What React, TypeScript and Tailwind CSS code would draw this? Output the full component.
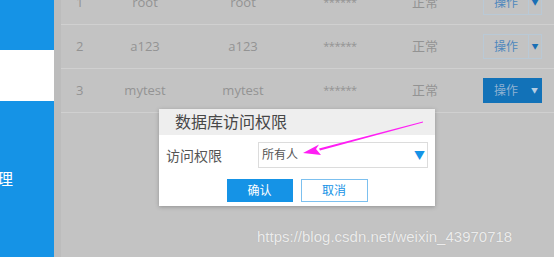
import React from 'react';

const rows = [
    { id: '1', name: 'root', user: 'root', active: false },
    { id: '2', name: 'a123', user: 'a123', active: false },
    { id: '3', name: 'mytest', user: 'mytest', active: true },
];

function OpButton({ active }: { active: boolean }) {
    return (
        <div
            className={
                active
                    ? 'ml-[11px] flex h-[25px] w-[59px] items-center bg-[#1272b8] border border-[#1272b8]'
                    : 'ml-[11px] flex h-[25px] w-[59px] items-center border border-[#b9c9d6]'
            }
        >
            <span className={active ? 'flex-1 text-center text-[12px] text-[#8fb1d2]' : 'flex-1 text-center text-[12px] text-[#4f88bd]'}>
                操作
            </span>
            <span className={active ? 'flex h-full w-[13px] items-center justify-center' : 'flex h-full w-[13px] items-center justify-center border-l border-[#b9c9d6]'}>
                <span className={active ? 'text-[7px] leading-none text-[#b5cde3]' : 'text-[7px] leading-none text-[#1a6fb5]'}>▼</span>
            </span>
        </div>
    );
}

export default function App() {
    return (
        <div
            className="relative flex h-[257px] w-[554px] overflow-hidden bg-[#c3c3c3]"
            style={{ fontFamily: '"Open Sans", "Noto Sans CJK SC", sans-serif' }}
        >
            {/* sidebar */}
            <div className="flex w-[54px] shrink-0 flex-col bg-[#1593e6]">
                <div className="h-[50px]" />
                <div className="h-[51px] bg-white" />
                <div className="mt-[66px] text-[16px] leading-[24px] text-white">
                    <span className="-ml-[3px]">理</span>
                </div>
            </div>
            <div className="w-[7px] shrink-0 bg-[#bcbcbc]" />

            {/* table */}
            <div className="flex-1">
                <div className="-mt-[19px]">
                    {rows.map(r => (
                        <div key={r.id} className="flex h-[44px] items-center border-b border-[#d0d0d0] text-[13px] text-[#939393]">
                            <div className="w-[45px] pl-[15px]">{r.id}</div>
                            <div className="w-[78px] text-center">{r.name}</div>
                            <div className="w-[118px] text-center">{r.user}</div>
                            <div className="w-[76px] text-center text-[11px] tracking-[-0.5px]">******</div>
                            <div className="w-[94px] text-center">正常</div>
                            <OpButton active={r.active} />
                        </div>
                    ))}
                </div>
            </div>

            {/* modal */}
            <div className="absolute left-[159px] top-[109px] w-[276px] bg-white shadow-[0_1px_4px_rgba(0,0,0,0.25)]">
                <div className="flex h-[26px] items-center bg-[#eeeeee] pl-[16px] text-[16px] text-[#474747]">
                    数据库访问权限
                </div>
                <div className="flex items-center pl-[7px] pr-[7px] pt-[7px]">
                    <div className="w-[92px] text-[14px] text-[#555]">访问权限</div>
                    <div className="flex h-[26px] flex-1 items-center justify-between border border-[#dcdcdc] pl-[3px] pr-[2px]">
                        <span className="text-[12px] text-[#555]">所有人</span>
                        <span className="text-[11px] leading-none text-[#1593e6]">▼</span>
                    </div>
                </div>
                <div className="flex justify-center gap-[8px] pb-[4px] pt-[11px]">
                    <button className="h-[23px] w-[66px] bg-[#1593e6] text-[12px] text-white">确认</button>
                    <button className="h-[23px] w-[67px] border border-[#7cc0ef] text-[12px] text-[#1593e6]">取消</button>
                </div>
            </div>

            {/* annotation arrow */}
            <svg className="absolute left-0 top-0" width="554" height="257" viewBox="0 0 554 257">
                <polygon points="423,121.5 319,148.5 320,150.5 423,122.5" fill="#ff1ef4" />
                <polygon points="303,153 319,144.5 316,149 321,155" fill="#ff1ef4" />
            </svg>

            {/* watermark */}
            <div
                className="absolute left-[257px] top-[228px] text-[15px] leading-[18px] text-[#ececec] [text-shadow:0_0_1px_rgba(0,0,0,0.15)]"
                style={{ fontFamily: '"Liberation Sans", Arial, sans-serif' }}
            >
                https://blog.csdn.net/weixin_43970718
            </div>
        </div>
    );
}
